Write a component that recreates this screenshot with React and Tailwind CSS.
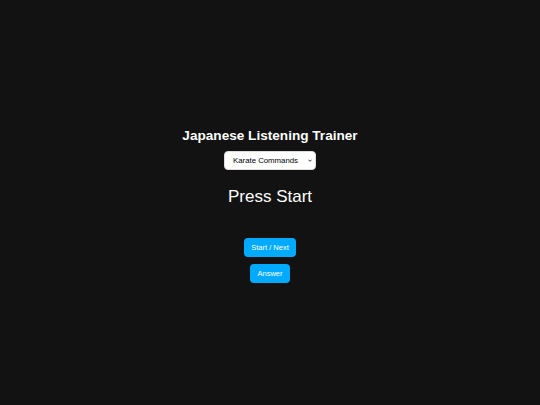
export default function App() {
  return (
    <div className="min-h-screen w-full bg-[#121212] flex flex-col items-center pt-[127px] text-white font-['Liberation_Sans',Arial,sans-serif]">
      <h1 className="text-[13.6px] leading-[18px] font-bold">Japanese Listening Trainer</h1>
      <div className="relative mt-[6px] flex">
        <select
          className="block appearance-none w-[92px] h-[19px] rounded-[4px] bg-white text-black text-[7.8px] pl-[8px] pr-[10px] border border-[#ddd] outline-none"
          defaultValue="karate"
        >
          <option value="karate">Karate Commands</option>
        </select>
        <svg
          className="absolute right-[4px] top-[8px] w-[4px] h-[3px] pointer-events-none"
          viewBox="0 0 10 6"
          fill="none"
          stroke="#000"
          strokeWidth="2"
        >
          <path d="M1 1l4 4 4-4" />
        </svg>
      </div>
      <div className="mt-[17px] text-[17px] leading-[20px]">Press Start</div>
      <div className="mt-[31px] flex flex-col items-center gap-[7px]">
        <button className="h-[19px] px-[7px] rounded-[4px] bg-[#00aaff] text-white text-[7.5px]">Start / Next</button>
        <button className="h-[19px] px-[7px] rounded-[4px] bg-[#00aaff] text-white text-[7.5px]">Answer</button>
      </div>
    </div>
  )
}
